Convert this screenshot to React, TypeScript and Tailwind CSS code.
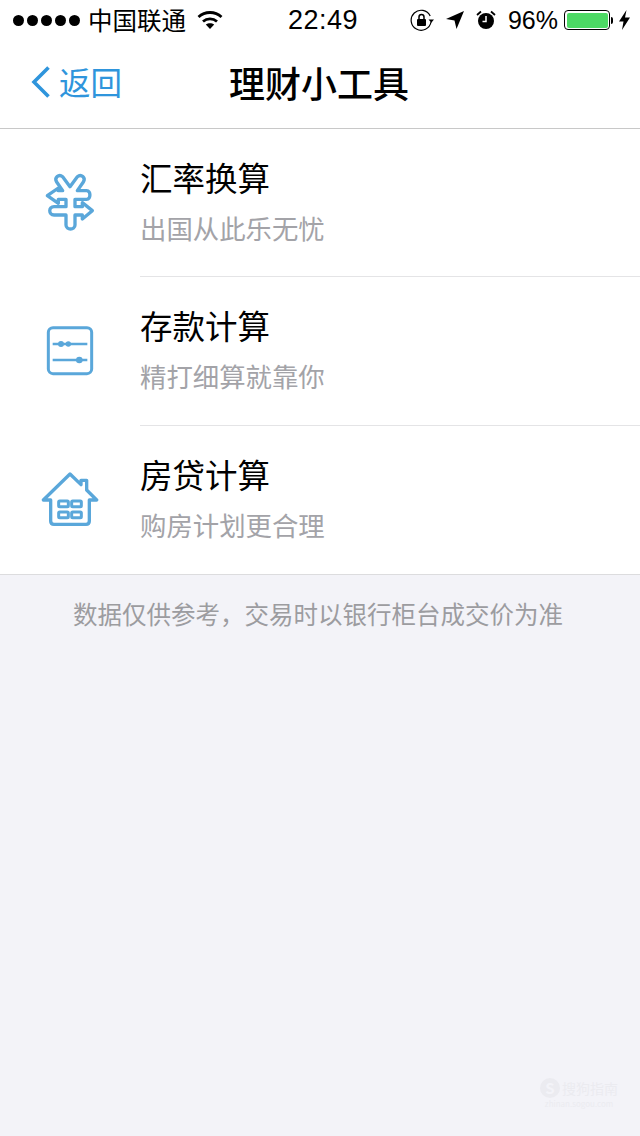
import { ReactNode } from 'react';

const ICON_BLUE = '#5aa7da';

// list icons share a 240 unit box drawn at 80px
function YuanIcon() {
  return (
    <svg width="80" height="80" viewBox="0 0 240 240" fill="none" stroke={ICON_BLUE} strokeWidth="10" strokeLinejoin="round" strokeLinecap="round">
      <path d="M80 66C72 54 86 40 98 50L120 80 142 50C154 40 168 54 160 66L142 92H170C183 92 183 118 170 118H135V140H157V128L187 152 157 177V165H135V195C135 211 108 211 108 195V165H72C55 165 55 140 72 140H108V118H85V130L52 107 85 84V92H98Z" />
    </svg>
  );
}

function SliderIcon() {
  return (
    <svg width="80" height="80" viewBox="0 0 240 240" fill="none" stroke={ICON_BLUE}>
      <rect x="55" y="53" width="130" height="138" rx="14" strokeWidth="9" />
      <path d="M68 102H172M68 150H172" strokeWidth="7" />
      <circle cx="93" cy="102" r="9" fill={ICON_BLUE} stroke="none" />
      <circle cx="115" cy="102" r="8" fill={ICON_BLUE} stroke="none" />
      <circle cx="148" cy="150" r="10" fill={ICON_BLUE} stroke="none" />
    </svg>
  );
}

function HouseIcon() {
  return (
    <svg width="80" height="80" viewBox="0 0 240 240" fill="none" stroke={ICON_BLUE} strokeWidth="10" strokeLinejoin="round" strokeLinecap="round">
      <path d="M40 120 120 42 153 74V61H170V90L200 120H178V183C178 190 174 193 168 193H72C66 193 62 190 62 183V120Z" />
      <rect x="86" y="123" width="29" height="17" rx="3" strokeWidth="9" />
      <rect x="125" y="123" width="29" height="17" rx="3" strokeWidth="9" />
      <rect x="86" y="156" width="29" height="17" rx="3" strokeWidth="9" />
      <rect x="125" y="156" width="29" height="17" rx="3" strokeWidth="9" />
    </svg>
  );
}

function RotationLockIcon() {
  return (
    <svg width="24" height="22" viewBox="0 0 24 22" fill="none" stroke="#000" strokeWidth="1.2">
      <path d="M21 13a10 10 0 1 1-.8-6" />
      <path d="M18.500 10.500h5.500l-2.700 3.200z" fill="#000" stroke="none" />
      <rect x="7" y="10" width="9" height="7" rx="1" fill="#000" stroke="none" />
      <path d="M9 10V8a2.500 2.500 0 0 1 5 0v2" strokeWidth="1.500" />
    </svg>
  );
}

function AlarmIcon() {
  return (
    <svg width="20" height="20" viewBox="0 0 20 20">
      <circle cx="10" cy="11" r="8" fill="#000" />
      <path d="M10 6v5.500H6.500" fill="none" stroke="#fff" strokeWidth="1.500" />
      <path d="M1 5 5 1.500M19 5l-4-3.500" stroke="#000" strokeWidth="1.800" />
    </svg>
  );
}

function StatusBar() {
  return (
    <div className="h-10 flex items-center pl-[13px] pr-[10px] text-black font-['Liberation_Sans','Noto_Sans_CJK_SC',sans-serif]">
      <div className="flex gap-[3px]">
        {[0, 1, 2, 3, 4].map(i => (
          <span key={i} className="w-[11px] h-[11px] rounded-full bg-black" />
        ))}
      </div>
      <span className="ml-[8px] text-[24.500px] leading-none font-['Noto_Sans_CJK_SC',sans-serif]">中国联通</span>
      <svg className="ml-[11px]" width="26" height="20" viewBox="0 0 26 20" fill="none" stroke="#000" strokeWidth="2.8">
        <path d="M1.500 7C8 1 18 1 24.500 7" />
        <path d="M6 11.500c4-3.600 10-3.600 14 0" />
        <path d="M13 19l-4.200-4.500c2.400-1.800 6-1.800 8.400 0z" fill="#000" stroke="none" />
      </svg>
      <span className="ml-[65px] text-[27px] leading-none font-medium tracking-[0.500px]">22:49</span>
      <div className="ml-auto flex items-center">
        <RotationLockIcon />
        <svg className="ml-[12px]" width="18" height="18" viewBox="0 0 18 18">
          <path d="M18 0 10.500 18 8.500 9.500 0 8z" fill="#000" />
        </svg>
        <span className="ml-[12px]"><AlarmIcon /></span>
        <span className="ml-[12px] text-[25px] leading-none font-light">96%</span>
        <div className="ml-[6px] w-[46px] h-[20px] rounded-[4px] border border-black p-[1.500px]">
          <div className="h-full w-full rounded-[2px] bg-[#4cd964]" />
        </div>
        <span className="w-[2px] h-[7px] ml-[1px] bg-black rounded-r-sm" />
        <svg className="ml-[6px]" width="11" height="20" viewBox="0 0 11 20">
          <path d="M7.500 0 0 11.500h4.500L3 20l8-12.500H6z" fill="#000" />
        </svg>
      </div>
    </div>
  );
}

function Row({ icon, title, sub, className, iconClass, last }: { icon: ReactNode; title: string; sub: string; className: string; iconClass: string; last?: boolean }) {
  return (
    <div className={`flex ${className}`}>
      <div className={`w-[140px] flex items-center justify-center shrink-0 ${iconClass}`}>{icon}</div>
      <div className={`flex-1 flex flex-col ${last ? '' : 'border-b border-[#e4e4e6]'}`}>
        <div className="mt-[28px] text-[32.500px] leading-[40px] text-black">{title}</div>
        <div className="mt-[13px] text-[26.400px] leading-[36px] text-[#a3a3a8]">{sub}</div>
      </div>
    </div>
  );
}

export default function App() {
  return (
    <div className="relative w-[640px] h-[1136px] overflow-hidden bg-[#f3f3f8] font-['Noto_Sans_CJK_SC',sans-serif]">
      <header className="bg-white border-b border-[#c8c8c8] h-[129px]">
        <StatusBar />
        <div className="h-[84px] grid grid-cols-[1fr_auto_1fr] items-center">
          <div className="flex items-center pl-[31px] text-[#2f95dc]">
            <svg width="19" height="32" viewBox="0 0 19 32" fill="none" stroke="currentColor" strokeWidth="3.6">
              <path d="M17.500 1.500 3 16l14.500 14.500" />
            </svg>
            <span className="ml-[9px] text-[31.500px]">返回</span>
          </div>
          <h1 className="text-[36px] font-medium text-black mr-[2px]">理财小工具</h1>
          <div />
        </div>
      </header>

      <div className="bg-white border-b border-[#dcdcde]">
        <Row className="h-[148px]" iconClass="pb-[6px]" icon={<YuanIcon />} title="汇率换算" sub="出国从此乐无忧" />
        <Row className="h-[149px]" iconClass="pb-[4px]" icon={<SliderIcon />} title="存款计算" sub="精打细算就靠你" />
        <Row className="h-[148px]" iconClass="" icon={<HouseIcon />} title="房贷计算" sub="购房计划更合理" last />
      </div>

      <p className="mt-[21px] pr-[4px] text-center text-[24.500px] leading-[36px] text-[#9c9ca0]">数据仅供参考{'\uFF0C'}交易时以银行柜台成交价为准</p>

      {/* faint site stamp in the corner */}
      <div className="absolute left-[540px] top-[1078px] text-[#ebebf0] flex flex-col items-center">
        <div className="flex items-center gap-[2px]">
          <span className="w-[20px] h-[20px] rounded-full bg-[#ebebf0] text-[#f3f3f8] text-[15px] leading-[20px] text-center font-bold">S</span>
          <span className="text-[14px] leading-[20px]">搜狗指南</span>
        </div>
        <span className="text-[8px] leading-[12px]">zhinan.sogou.com</span>
      </div>
    </div>
  );
}
